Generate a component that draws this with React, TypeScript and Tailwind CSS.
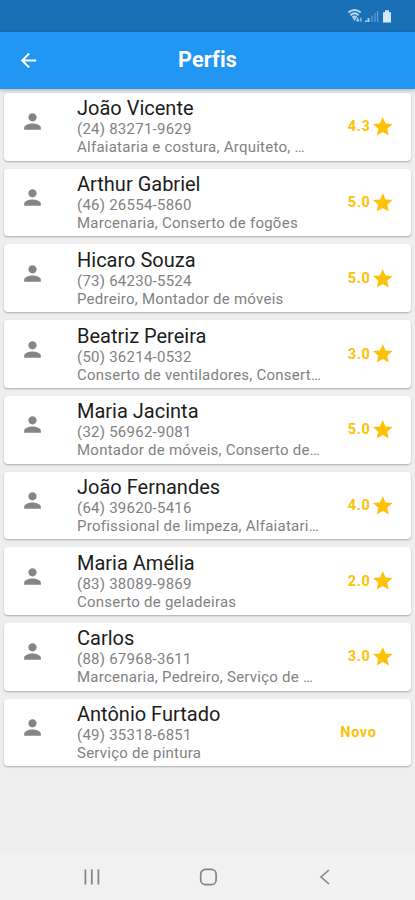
type Profile = { name: string; phone: string; jobs: string; rating?: string };

const profiles: Profile[] = [
  { name: "João Vicente", phone: "(24) 83271-9629", jobs: "Alfaiataria e costura, Arquiteto, …", rating: "4.3" },
  { name: "Arthur Gabriel", phone: "(46) 26554-5860", jobs: "Marcenaria, Conserto de fogões", rating: "5.0" },
  { name: "Hicaro Souza", phone: "(73) 64230-5524", jobs: "Pedreiro, Montador de móveis", rating: "5.0" },
  { name: "Beatriz Pereira", phone: "(50) 36214-0532", jobs: "Conserto de ventiladores, Consert…", rating: "3.0" },
  { name: "Maria Jacinta", phone: "(32) 56962-9081", jobs: "Montador de móveis, Conserto de…", rating: "5.0" },
  { name: "João Fernandes", phone: "(64) 39620-5416", jobs: "Profissional de limpeza, Alfaiatari…", rating: "4.0" },
  { name: "Maria Amélia", phone: "(83) 38089-9869", jobs: "Conserto de geladeiras", rating: "2.0" },
  { name: "Carlos", phone: "(88) 67968-3611", jobs: "Marcenaria, Pedreiro, Serviço de …", rating: "3.0" },
  { name: "Antônio Furtado", phone: "(49) 35318-6851", jobs: "Serviço de pintura" },
];

function StatusBar() {
  return (
    <div className="flex h-8 shrink-0 items-center justify-end bg-[#1a70b7] pr-[22px]">
      <svg width="46" height="16" viewBox="0 0 46 16" className="text-[#b9d8ef]" fill="none" stroke="currentColor">
        <path d="M1.3 4.6Q7.5 -.4 13.7 4.6M3.4 7.2Q7.5 3.4 11.6 7.2M5.4 9.6Q7.5 7.5 9.6 9.6" strokeWidth="1.9" />
        <path d="m6.2 10.4 1.4 2 1.4-2z" fill="currentColor" strokeWidth=".6" />
        <path d="M10.8 9.4v4M9.4 11.9l1.4 1.4 1.4-1.4M13.9 13.4V9.8" strokeWidth="1.1" />
        <path d="M19 14v-1.5M21.5 14v-3.8" strokeWidth="2" />
        <path d="M25 14V7.5M28 14V5M30.6 14V3" strokeWidth="1.3" opacity=".42" />
        <path d="M36 4.2h2V2.2h4v2h2v10.4h-8z" fill="#d3e8f8" stroke="none" />
      </svg>
    </div>
  );
}

function AppBar() {
  return (
    <header className="relative z-10 grid h-[56.5px] shrink-0 grid-cols-[57px_1fr_57px] items-center bg-[#2196f3] shadow-[0_1px_4px_rgba(0,0,0,0.3)]">
      <svg width="23" height="23" viewBox="0 0 24 24" fill="#fff" className="ml-[17px]">
        <path d="M20 11H7.83l5.59-5.59L12 4l-8 8 8 8 1.41-1.41L7.83 13H20v-2z" />
      </svg>
      <h1 className="text-center text-[21.5px] leading-6 font-bold tracking-[0.2px] text-white">Perfis</h1>
    </header>
  );
}

function ProfileCard({ name, phone, jobs, rating }: Profile) {
  return (
    <li className="flex h-[67.6px] items-center rounded-[4px] bg-white pr-[17px] pl-4 shadow-[0_1px_2px_rgba(0,0,0,0.28)]">
      <svg width="25" height="25" viewBox="0 0 24 24" fill="#858585" className="mb-[10px] shrink-0">
        <path d="M12 12c2.21 0 4-1.79 4-4s-1.79-4-4-4-4 1.79-4 4 1.79 4 4 4zm0 2c-2.67 0-8 1.34-8 4v2h16v-2c0-2.66-5.33-4-8-4z" />
      </svg>
      <div className="ml-8 min-w-0 flex-1 whitespace-nowrap">
        <p className="text-[20px] leading-[23px] text-[#1c1c1c]">{name}</p>
        <p className="text-[15px] leading-[18px] tracking-[0.25px] text-[#828282]">{phone}</p>
        <p className="text-[15px] leading-[18px] tracking-[0.25px] text-[#828282]">{jobs}</p>
      </div>
      {rating ? (
        <div className="flex items-center text-[#ffc107]">
          <span className="pt-[1px] text-[14.5px] leading-4 font-bold tracking-[0.6px]">{rating}</span>
          <svg width="23.5" height="23.5" viewBox="0 0 24 24" fill="currentColor">
            <path d="M12 17.27 18.18 21l-1.64-7.03L22 9.24l-7.19-.61L12 2 9.19 8.63 2 9.24l5.46 4.73L5.82 21z" />
          </svg>
        </div>
      ) : (
        <span className="mr-[17.5px] pt-[1px] text-[14.5px] leading-4 font-bold tracking-[0.6px] text-[#ffc107]">Novo</span>
      )}
    </li>
  );
}

function NavigationBar() {
  return (
    <nav className="flex h-[47px] shrink-0 items-center justify-between bg-[#f1f1f1] pr-[80px] pl-[82px] text-[#858585]">
      <svg width="20" height="20" viewBox="0 0 20 20" stroke="currentColor" strokeWidth="1.8">
        <path d="M3.4 2.5v15M9.8 2.5v15M16.4 2.5v15" />
      </svg>
      <svg width="20" height="20" viewBox="0 0 20 20" fill="none" stroke="currentColor" strokeWidth="1.7">
        <rect x="1.7" y="2.4" width="15.4" height="15.2" rx="4.7" />
      </svg>
      <svg width="20" height="20" viewBox="0 0 20 20" fill="none" stroke="currentColor" strokeWidth="1.6">
        <path d="m14 3-8 7 8 7" />
      </svg>
    </nav>
  );
}

export default function App() {
  return (
    <div className="flex h-[900px] w-[415px] flex-col overflow-hidden bg-[#eeeeee] font-[Roboto,sans-serif]">
      <StatusBar />
      <AppBar />
      <main className="flex-1 px-1 pt-[4.5px]">
        <ul className="flex flex-col gap-[8.15px]">
          {profiles.map((profile) => (
            <ProfileCard key={profile.phone} {...profile} />
          ))}
        </ul>
      </main>
      <NavigationBar />
    </div>
  );
}
